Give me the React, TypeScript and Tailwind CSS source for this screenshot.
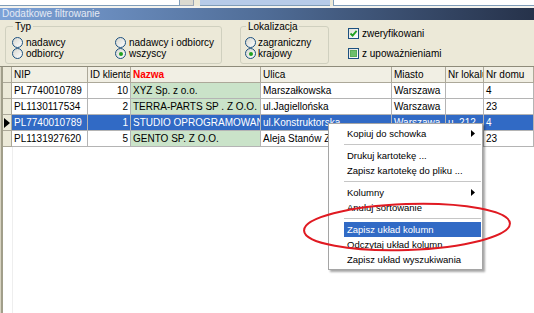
import React from "react";

const FONT = "font-['Liberation_Sans',Arial,sans-serif]";

function Radio({ checked }: { checked?: boolean }) {
  return (
    <span className="w-[11px] h-[11px] rounded-full border border-[#1c5180] bg-gradient-to-br from-[#d6d6ce] to-white flex items-center justify-center shrink-0">
      {checked && <span className="w-[4px] h-[4px] rounded-full bg-[#21a121]" />}
    </span>
  );
}

function Check({ kind }: { kind: "check" | "fill" }) {
  return (
    <span className="w-[11px] h-[11px] border border-[#1c5180] bg-gradient-to-br from-[#e0e0da] to-white flex items-center justify-center shrink-0">
      {kind === "check" ? (
        <svg width="9" height="9" viewBox="0 0 9 9">
          <path d="M1.5 4.5 L3.6 6.6 L7.6 1.8" fill="none" stroke="#21a121" strokeWidth="1.8" />
        </svg>
      ) : (
        <span className="w-[7px] h-[7px] bg-[#6cbf6c] border border-[#5aae5a]" />
      )}
    </span>
  );
}

const cols = [76, 43, 130, 131, 54, 38, 50];
const headers = ["NIP", "ID klienta", "Nazwa", "Ulica", "Miasto", "Nr lokalu", "Nr domu"];
const rows = [
  ["PL7740010789", "10", "XYZ Sp. z o.o.", "Marszałkowska", "Warszawa", "", "4"],
  ["PL1130117534", "2", "TERRA-PARTS SP . Z O.O.", "ul.Jagiellońska", "Warszawa", "", "23"],
  ["PL7740010789", "1", "STUDIO OPROGRAMOWANIA", "ul.Konstruktorska", "Warszawa", "u. 212", "4"],
  ["PL1131927620", "5", "GENTO SP. Z O.O.", "Aleja Stanów Zjednoczonych", "Warszawa", "", "23"],
];

function MenuItem({ label, arrow, hi }: { label: string; arrow?: boolean; hi?: boolean }) {
  return (
    <div
      className={
        "h-[15px] ml-[15px] pl-[3px] pr-[6px] flex items-center justify-between whitespace-nowrap " +
        (hi ? "bg-[#316ac5] text-white" : "text-black")
      }
    >
      <span>{label}</span>
      {arrow && (
        <svg width="4" height="7" viewBox="0 0 4 7">
          <path d="M0 0 L4 3.5 L0 7 Z" fill="#000" />
        </svg>
      )}
    </div>
  );
}

function Sep() {
  return (
    <div className="h-[7px] ml-[15px] flex items-center">
      <div className="h-px w-full bg-[#c6c6c6]" />
    </div>
  );
}

export default function App() {
  return (
    <div className={"relative w-[534px] h-[313px] overflow-hidden bg-[#ece9d8] flex flex-col text-[10px] leading-none " + FONT}>
      {/* top strip */}
      <div className="h-[6px] flex shrink-0">
        <div className="w-[180px] bg-white border-b border-r border-[#7f9db9]" />
        <div className="w-[14px] bg-[#dcdad0] border-b border-r border-[#9aa6b6]" />
        <div className="w-[6px]" />
        <div className="w-[130px] bg-[#b7cbe8] border-b border-[#7f9db9]" />
        <div className="w-[3px]" />
        <div className="flex-1 bg-white border-l border-b border-[#7f9db9]" />
      </div>
      <div className="h-[2px] shrink-0 bg-[#f4f3ee]" />
      {/* title bar */}
      <div className="h-[12px] shrink-0 bg-gradient-to-r from-[#7ca2d8] via-[#4f6c96] to-[#26324a] flex items-center pl-[2px] text-[#e4eaf4]">
        Dodatkowe filtrowanie
      </div>
      {/* filter panel */}
      <div className="h-[46px] shrink-0 flex items-start pt-[1px]">
        <fieldset className="ml-[5px] w-[217px] h-[43px] border border-[#d0d0bf] rounded-[3px] pl-[6px] pt-[5px]">
          <legend className="ml-[1px] px-[2px] leading-[11px] text-black">Typ</legend>
          <div className="grid grid-cols-[103px_1fr] gap-y-0">
            <div className="h-[11px] flex items-center gap-[3px]"><Radio /><span>nadawcy</span></div>
            <div className="h-[11px] flex items-center gap-[3px]"><Radio /><span>nadawcy i odbiorcy</span></div>
            <div className="h-[11px] flex items-center gap-[3px]"><Radio /><span>odbiorcy</span></div>
            <div className="h-[11px] flex items-center gap-[3px]"><Radio checked /><span>wszyscy</span></div>
          </div>
        </fieldset>
        <fieldset className="ml-[18px] w-[89px] h-[43px] border border-[#d0d0bf] rounded-[3px] pl-[4px] pt-[5px]">
          <legend className="ml-[1px] px-[2px] leading-[11px] text-black">Lokalizacja</legend>
          <div className="flex flex-col">
            <div className="h-[11px] flex items-center gap-[2px]"><Radio /><span>zagraniczny</span></div>
            <div className="h-[11px] flex items-center gap-[2px]"><Radio checked /><span>krajowy</span></div>
          </div>
        </fieldset>
        <div className="ml-[19px] pt-[7px] flex flex-col gap-[9px]">
          <div className="h-[11px] flex items-center gap-[3px]"><Check kind="check" /><span>zweryfikowani</span></div>
          <div className="h-[11px] flex items-center gap-[3px]"><Check kind="fill" /><span>z upoważnieniami</span></div>
        </div>
      </div>
      {/* grid */}
      <div className="flex-1 flex bg-white border-t border-[#8e8b7a]">
        <div className="w-[1px] bg-[#d8d4c2]" />
        <div className="w-[2px] bg-[#a19e8a]" />
        <div className="flex-1 flex flex-col">
          {/* header */}
          <div className="h-[16px] flex shrink-0">
            <div className="w-[9px] bg-[#ece9d8] border-r border-b border-[#aca899]" />
            {headers.map((h, i) => (
              <div
                key={h}
                style={{ width: cols[i] }}
                className={
                  "shrink-0 bg-[#f1efe4] border-r border-b border-[#aca899] flex items-center pl-[2px] overflow-hidden whitespace-nowrap " +
                  (i === 2 ? "text-[#ff0000] font-bold" : "text-black")
                }
              >
                {h}
              </div>
            ))}
          </div>
          {rows.map((r, ri) => {
            const sel = ri === 2;
            return (
              <div key={ri} className="h-[16px] flex shrink-0">
                <div className="w-[9px] bg-[#ece9d8] border-r border-b border-[#aca899] flex items-center justify-center">
                  {sel && (
                    <svg width="6" height="10" viewBox="0 0 6 10">
                      <path d="M0 0 L6 5 L0 10 Z" fill="#000" />
                    </svg>
                  )}
                </div>
                {r.map((c, ci) => (
                  <div
                    key={ci}
                    style={{ width: cols[ci] }}
                    className={
                      "shrink-0 border-r border-b border-[#b4b4b4] flex items-center overflow-hidden whitespace-nowrap " +
                      (ci === 1 ? "justify-end pr-[2px] " : "pl-[2px] ") +
                      (sel ? "bg-[#316ac5] text-white" : ci === 2 ? "bg-[#cae3c9] text-black" : "bg-white text-black")
                    }
                  >
                    {c}
                  </div>
                ))}
              </div>
            );
          })}
          <div className="flex-1 flex">
            <div className="w-[10px] border-r border-[#eeeeee]" />
          </div>
        </div>
      </div>

      {/* context menu */}
      <div className="absolute left-[328px] top-[123px] w-[155px] bg-white border border-[#a5a5a5] shadow-[2px_2px_2px_rgba(0,0,0,0.35)] py-[2px] pr-[1px] text-[9.5px]">
        <MenuItem label="Kopiuj do schowka" arrow />
        <Sep />
        <MenuItem label="Drukuj kartotekę ..." />
        <MenuItem label="Zapisz kartotekę do pliku ..." />
        <Sep />
        <MenuItem label="Kolumny" arrow />
        <MenuItem label="Anuluj sortowanie" />
        <Sep />
        <MenuItem label="Zapisz układ kolumn" hi />
        <MenuItem label="Odczytaj układ kolumn" />
        <MenuItem label="Zapisz układ wyszukiwania" />
      </div>

      {/* red ellipse annotation */}
      <svg className="absolute left-[300px] top-[199px]" width="216" height="58" viewBox="0 0 216 58">
        <ellipse cx="107" cy="28" rx="103" ry="23" fill="none" stroke="#e01a22" strokeWidth="2" transform="rotate(-2 107 28)" />
      </svg>
    </div>
  );
}
